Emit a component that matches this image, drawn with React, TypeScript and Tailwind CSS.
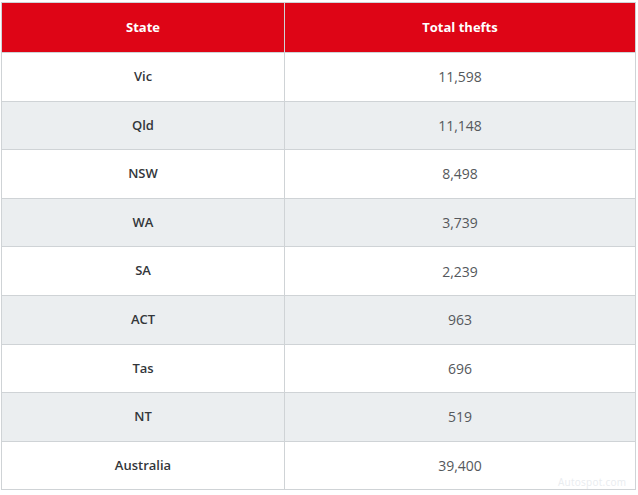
import React from 'react';

const rows = [
  { state: 'Vic', total: '11,598' },
  { state: 'Qld', total: '11,148' },
  { state: 'NSW', total: '8,498' },
  { state: 'WA', total: '3,739' },
  { state: 'SA', total: '2,239' },
  { state: 'ACT', total: '963' },
  { state: 'Tas', total: '696' },
  { state: 'NT', total: '519' },
  { state: 'Australia', total: '39,400' },
];

const App = () => {
  return (
    <div className="relative w-[638px] h-[495px] bg-white pt-[2px] pl-[1px] font-['Open_Sans',sans-serif]">
      <table className="w-[635px] table-fixed border-collapse text-[13px]">
        <colgroup>
          <col className="w-[283px]" />
          <col />
        </colgroup>
        <thead>
          <tr className="h-[50px] bg-[#de0516] text-white">
            <th className="border border-[#cfd3d6] font-bold">State</th>
            <th className="border border-[#cfd3d6] font-bold">Total thefts</th>
          </tr>
        </thead>
        <tbody>
          {rows.map((row, i) => (
            <tr key={row.state} className={`h-[48.6px] ${i % 2 === 1 ? 'bg-[#ebeef0]' : 'bg-white'}`}>
              <td className="border border-[#cfd3d6] text-center font-semibold text-[#33363a]">{row.state}</td>
              <td className="border border-[#cfd3d6] text-center text-[14px] text-[#55585c]">{row.total}</td>
            </tr>
          ))}
        </tbody>
      </table>

      {/* watermark */}
      <span className="absolute left-[558px] top-[475px] text-[10px] tracking-wide text-[#e9ecef]">Autospot.com</span>
    </div>
  );
};

export default App;
